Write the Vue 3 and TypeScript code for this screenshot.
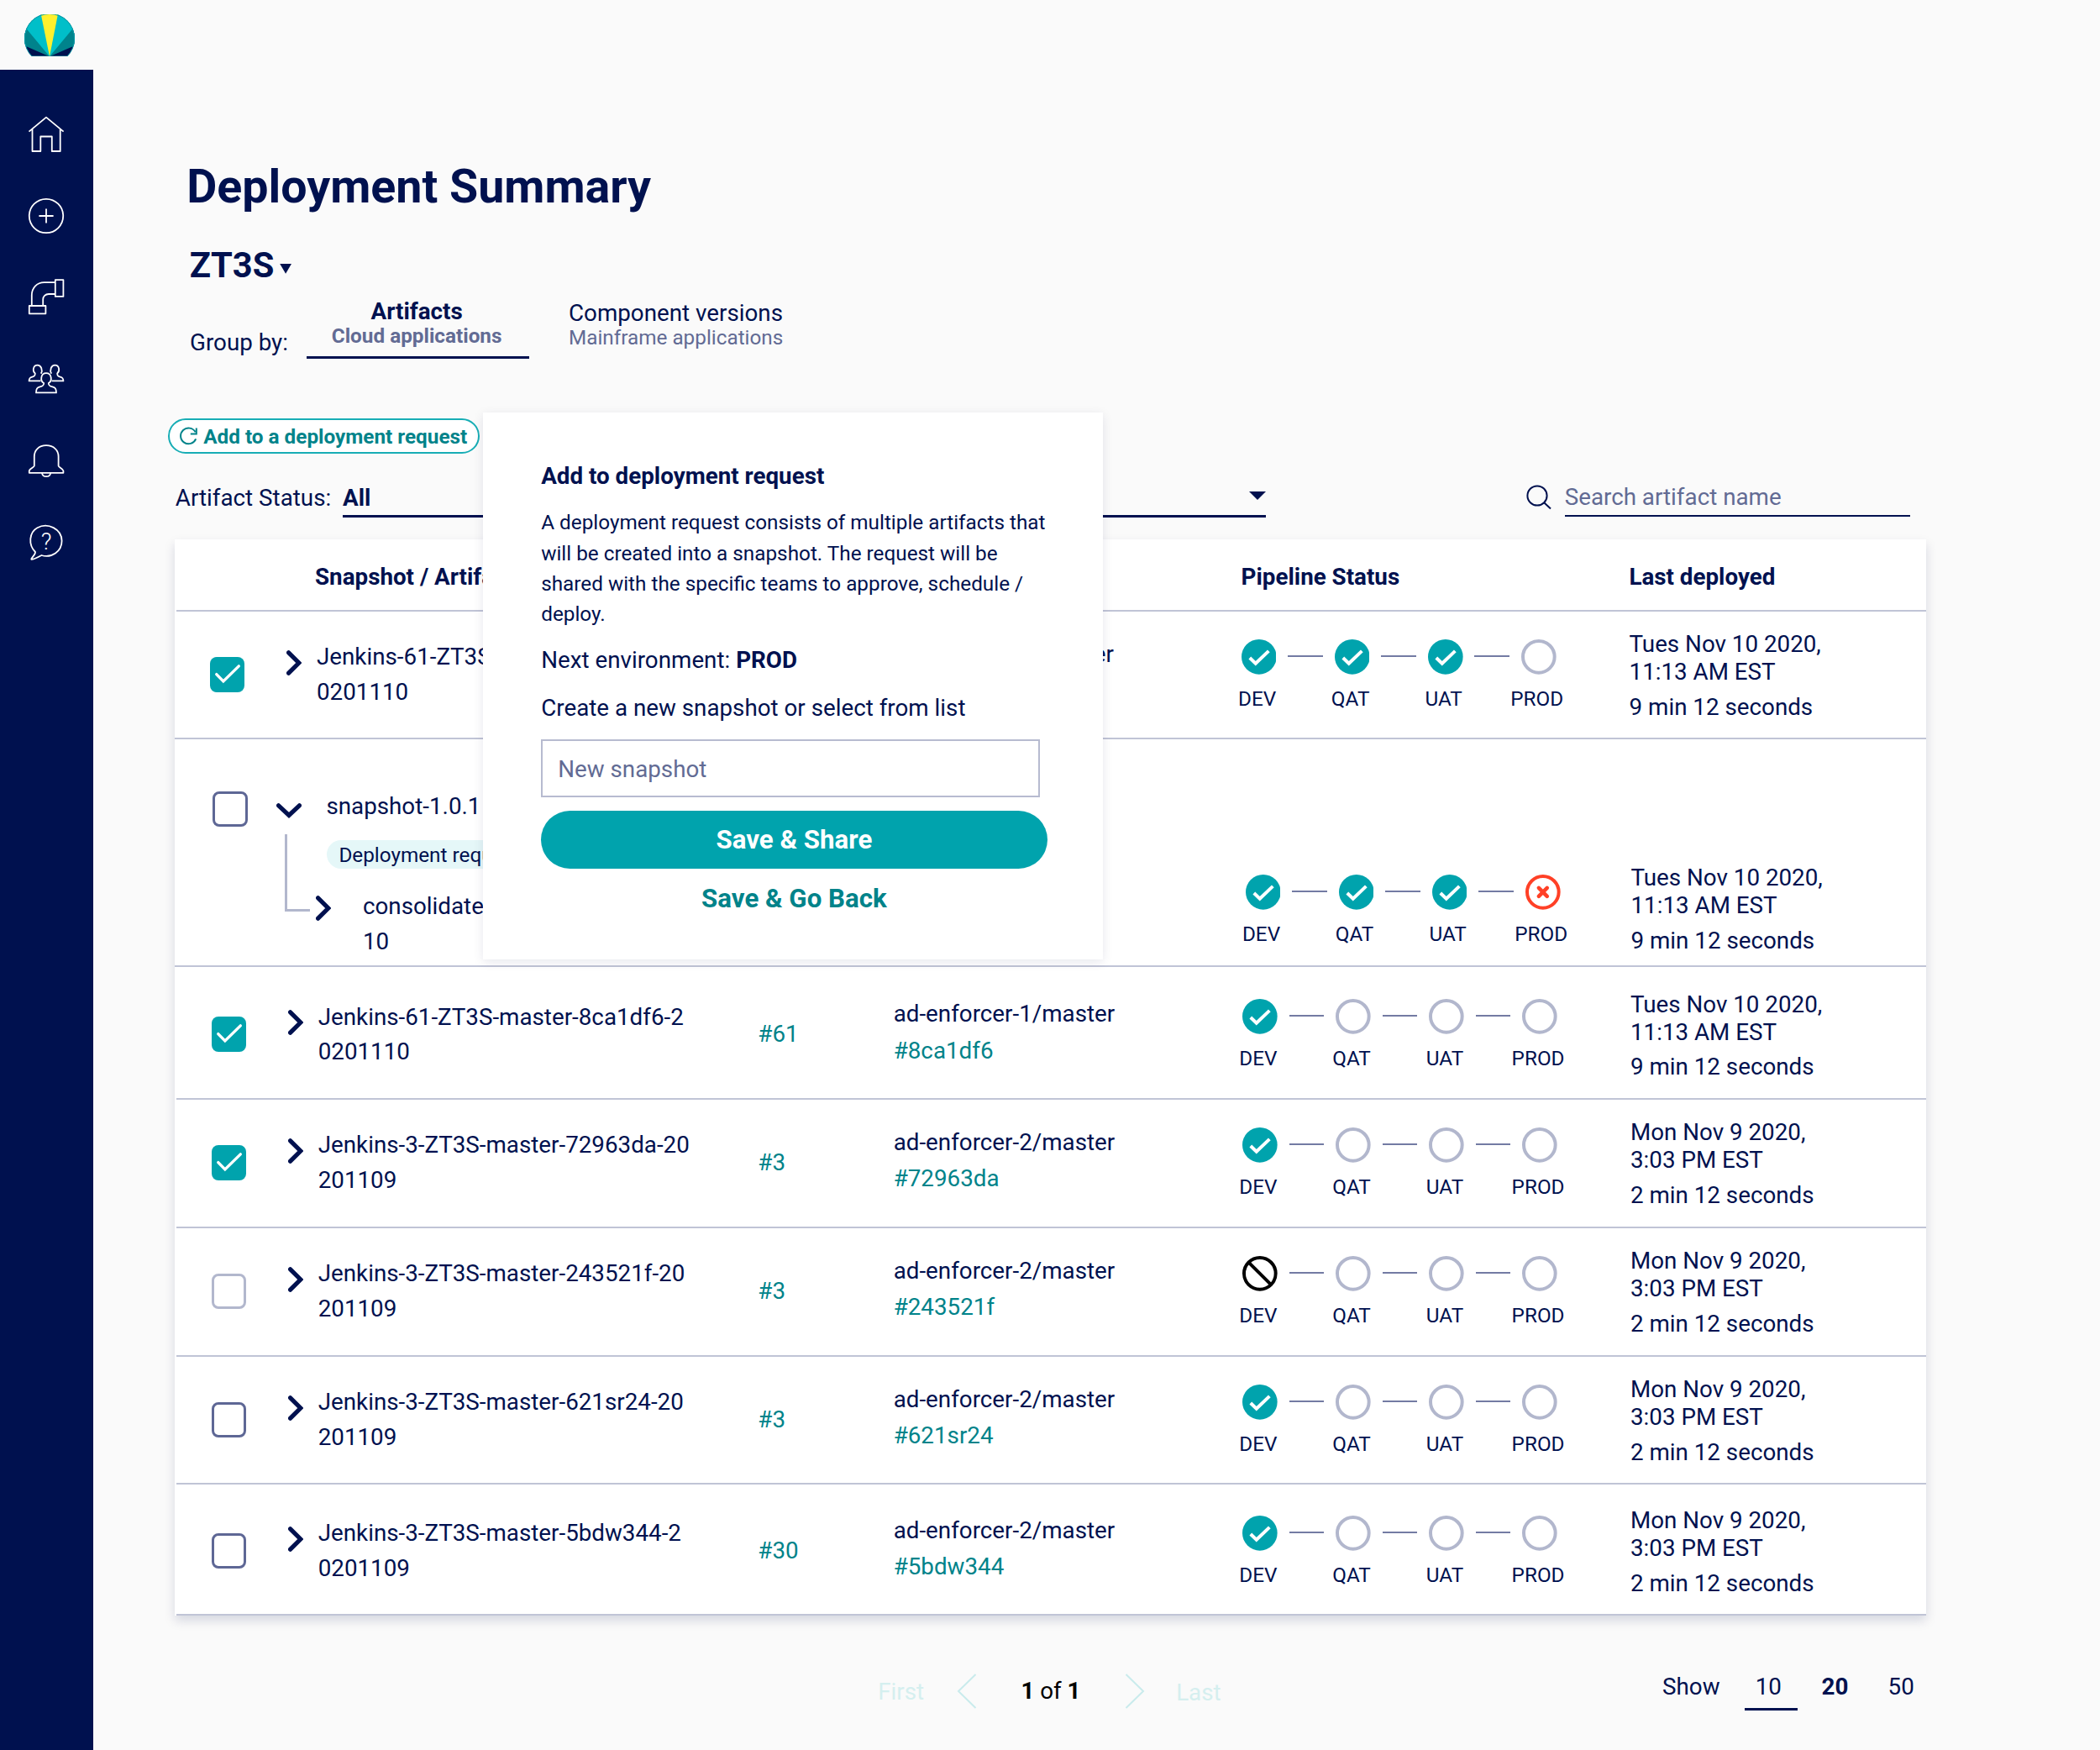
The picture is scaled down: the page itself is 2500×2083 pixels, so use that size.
<script setup lang="ts">
type Status = 'done' | 'todo' | 'failed' | 'blocked'
type Check = 'checked' | 'unchecked' | 'disabled'

interface Row {
  check: Check
  name: string[]
  build: string
  branch: string
  commit: string
  stages: Status[]
  date: string[]
  duration: string
  kind: string
}

const environments = ['DEV', 'QAT', 'UAT', 'PROD']
const tuesday = ['Tues Nov 10 2020,', '11:13 AM EST']
const monday = ['Mon Nov 9 2020,', '3:03 PM EST']

const firstRow: Row = {
  check: 'checked', name: ['Jenkins-61-ZT3S-master-8ca1df6-2', '0201110'], build: '#61',
  branch: 'ad-enforcer-1/master', commit: '#8ca1df6', stages: ['done', 'done', 'done', 'todo'],
  date: tuesday, duration: '9 min 12 seconds', kind: 'lead',
}

const rows: Row[] = [
  firstRow,
  {
    check: 'unchecked', name: [], build: '', branch: '', commit: '',
    stages: ['done', 'done', 'done', 'failed'], date: tuesday, duration: '9 min 12 seconds', kind: 'group',
  },
  { ...firstRow, stages: ['done', 'todo', 'todo', 'todo'], kind: 'roomy' },
  {
    check: 'checked', name: ['Jenkins-3-ZT3S-master-72963da-20', '201109'], build: '#3',
    branch: 'ad-enforcer-2/master', commit: '#72963da', stages: ['done', 'todo', 'todo', 'todo'],
    date: monday, duration: '2 min 12 seconds', kind: 'plain',
  },
  {
    check: 'disabled', name: ['Jenkins-3-ZT3S-master-243521f-20', '201109'], build: '#3',
    branch: 'ad-enforcer-2/master', commit: '#243521f', stages: ['blocked', 'todo', 'todo', 'todo'],
    date: monday, duration: '2 min 12 seconds', kind: 'plain',
  },
  {
    check: 'unchecked', name: ['Jenkins-3-ZT3S-master-621sr24-20', '201109'], build: '#3',
    branch: 'ad-enforcer-2/master', commit: '#621sr24', stages: ['done', 'todo', 'todo', 'todo'],
    date: monday, duration: '2 min 12 seconds', kind: 'plain short',
  },
  {
    check: 'unchecked', name: ['Jenkins-3-ZT3S-master-5bdw344-2', '0201109'], build: '#30',
    branch: 'ad-enforcer-2/master', commit: '#5bdw344', stages: ['done', 'todo', 'todo', 'todo'],
    date: monday, duration: '2 min 12 seconds', kind: 'last',
  },
]
</script>

<template>
  <div class="app">
    <aside class="sidebar">
      <div class="brand">
        <svg class="logo" viewBox="0 0 60 50.5">
          <defs>
            <clipPath id="dome"><path d="M9 50.3 A30 30 0 1 1 51 50.3 Z" /></clipPath>
          </defs>
          <g clip-path="url(#dome)">
            <rect width="60" height="51" fill="#00114f" />
            <path d="M30 50.3 L-2 36.3 V-2 H62 V36.3 Z" fill="#00838c" />
            <path d="M30 50.3 L-12 0 V-10 H72 V0 Z" fill="#00bfc9" />
            <path d="M30 50.3 L19.8 0 H39.9 Z" fill="#fff02d" />
          </g>
          <path d="M9 50 A29.6 29.6 0 1 1 51 50 Z" fill="none" stroke="#00a3ad" stroke-width="0.9" />
        </svg>
      </div>
      <nav class="nav">
        <svg viewBox="0 0 44 44">
          <path d="M1.5 18.6 L22 1.6 L42.6 18.6 M5.5 15.6 V42 H15.3 V24.5 H28.8 V42 H38.7 V15.6" />
        </svg>
        <svg viewBox="0 0 44 44">
          <circle cx="22" cy="22" r="20.2" />
          <path d="M13.4 22 H30.6 M22 13.4 V30.6" />
        </svg>
        <svg viewBox="0 0 44 44">
          <path d="M32.8 1.2 H42.4 V20.9 H32.8 Z M1.8 32 H21.4 V41.3 H1.8 Z" />
          <path d="M32.8 4.2 H19.8 C10.6 4.2 4.8 11 4.8 19.5 V32 M32.8 18 H25 C21 18 18.2 21 18.2 24.6 V32" />
        </svg>
        <svg viewBox="0 0 44 44">
          <path d="M19.2 27 C14.4 24.4 15.4 15.2 22 15.2 C28.6 15.2 29.6 24.4 24.8 27 C24.8 29.8 26 30.6 29.4 31.4 C32.8 32.4 34 33.6 34 38.4 H10 C10 33.6 11.2 32.4 14.6 31.4 C18 30.6 19.2 29.8 19.2 27 Z" />
          <path d="M15.8 15.8 C18.2 11.6 16 5.6 11.6 5.6 C6.6 5.6 5.2 12.4 8.8 15.4 C8.8 18.4 7.8 18.9 5.4 19.6 C2.6 20.4 1.6 21.2 1.6 24.4 H15.4" />
          <path d="M28.2 15.8 C25.8 11.6 28 5.6 32.4 5.6 C37.4 5.6 38.8 12.4 35.2 15.4 C35.2 18.4 36.2 18.9 38.6 19.6 C41.4 20.4 42.4 21.2 42.4 24.4 H28.6" />
        </svg>
        <svg viewBox="0 0 44 44">
          <path d="M22 4.2 C13 4.2 7.8 10 7.8 17.5 V28.6 C7.8 30 2 31.8 1.8 34.4 V36.8 H42.4 V34.4 C42 31.8 36.6 30 36.6 28.6 V17.5 C36.6 10 31.2 4.2 22 4.2 Z M17 37 C17.6 42.6 26.6 42.6 27.2 37" />
        </svg>
        <svg viewBox="0 0 44 44">
          <path d="M9 33 C0.4 24.4 1.6 9.6 11.4 4.2 C24 -2.6 40.4 5.6 40.6 19.8 C40.6 32.4 28.4 40.6 16.4 37 C12.4 38.8 8.8 41.6 4.4 41.8 C3.2 40.6 9.4 36.6 9 33 Z" />
          <text x="22" y="30" text-anchor="middle">?</text>
        </svg>
      </nav>
    </aside>

    <main class="content">
      <h1>Deployment Summary</h1>
      <div class="project">
        <span>ZT3S</span>
        <svg viewBox="0 0 14 12"><path d="M0 0 H14 L7 12 Z" fill="#00114f" /></svg>
      </div>
      <div class="grouping">
        <span class="grouping-label">Group by:</span>
        <div class="tab active"><b>Artifacts</b><small>Cloud applications</small></div>
        <div class="tab"><span>Component versions</span><small>Mainframe applications</small></div>
      </div>

      <button class="add">
        <svg viewBox="0 0 22 22"><path d="M20.2 14.4 A9.4 9.4 0 1 1 19.6 6.2 M20.8 1.6 V8.4 H13.8" /></svg>
        <span>Add to a deployment request</span>
      </button>

      <div class="filters">
        <span class="filters-label">Artifact Status:</span>
        <div class="select">
          <b>All</b>
          <svg viewBox="0 0 20 10"><path d="M0 0 H20 L10 10 Z" fill="#00114f" /></svg>
        </div>
        <svg class="search-icon" viewBox="0 0 30 30">
          <circle cx="13" cy="13" r="11.6" /><path d="M21.2 21.2 L29 28.6" />
        </svg>
        <div class="search">Search artifact name</div>
      </div>

      <section class="table">
        <div class="head">
          <b class="head-name">Snapshot / Artifact</b>
          <b class="head-pipeline">Pipeline Status</b>
          <b>Last deployed</b>
        </div>
        <div v-for="(row, i) in rows" :key="i" class="row" :class="row.kind">
          <div class="check-cell">
            <span class="checkbox" :class="row.check">
              <svg v-if="row.check === 'checked'" viewBox="0 0 42 42"><path d="M7.8 20.8 L16 29.2 L34.6 11" /></svg>
            </span>
          </div>

          <div v-if="row.kind === 'group'" class="tree">
            <div class="tree-top">
              <svg class="chevron-down" viewBox="0 0 30 18"><path d="M2.6 2.8 L15 14.4 L27.4 2.8" /></svg>
              <span>snapshot-1.0.1</span>
            </div>
            <div class="tree-body">
              <span class="elbow"></span>
              <div>
                <span class="badge">Deployment request</span>
                <div class="child">
                  <svg class="chevron" viewBox="0 0 18 30"><path d="M2.6 2.8 L14.8 15 L2.6 27.2" /></svg>
                  <span class="child-name">consolidated-ZT3S-master-202011<br />10</span>
                </div>
              </div>
            </div>
          </div>

          <template v-else>
            <svg class="chevron" viewBox="0 0 18 30"><path d="M2.6 2.8 L14.8 15 L2.6 27.2" /></svg>
            <div class="name"><div v-for="part in row.name" :key="part">{{ part }}</div></div>
            <div class="build">{{ row.build }}</div>
            <div class="branch">{{ row.branch }}<br /><span>{{ row.commit }}</span></div>
          </template>

          <div class="pipeline">
            <template v-for="(stage, s) in row.stages" :key="s">
              <span v-if="s > 0" class="link"></span>
              <div class="stage">
                <svg viewBox="0 0 42 42">
                  <template v-if="stage === 'done'">
                    <circle cx="21" cy="21" r="21" fill="#00a3ad" />
                    <path d="M9.9 22.2 L16.9 29 L32.6 14" fill="none" stroke="#fff" stroke-width="4" />
                  </template>
                  <circle v-else-if="stage === 'todo'" cx="21" cy="21" r="19" fill="none" stroke="#b2b7cd" stroke-width="4" />
                  <g v-else-if="stage === 'failed'" fill="none" stroke="#ff4026">
                    <circle cx="21" cy="21" r="19" stroke-width="4" />
                    <path d="M16 16 L26 26 M26 16 L16 26" stroke-width="4.6" stroke-linecap="round" />
                  </g>
                  <g v-else fill="none" stroke="#000" stroke-width="4">
                    <circle cx="21" cy="21" r="19" /><path d="M7.6 7.6 L34.4 34.4" />
                  </g>
                </svg>
                <span class="env">{{ environments[s] }}</span>
              </div>
            </template>
          </div>

          <div class="deployed">
            <div v-for="part in row.date" :key="part">{{ part }}</div>
            <div class="duration">{{ row.duration }}</div>
          </div>
        </div>
      </section>

      <footer class="pager">
        <span class="muted first">First</span>
        <svg class="arrow prev" viewBox="0 0 24 42"><path d="M22.5 1 L2 21 L22.5 41" /></svg>
        <span class="position"><b>1</b> of <b>1</b></span>
        <svg class="arrow next" viewBox="0 0 24 42"><path d="M1.5 1 L22 21 L1.5 41" /></svg>
        <span class="muted final">Last</span>
        <span class="show">Show</span>
        <span class="size current">10</span>
        <b class="size twenty">20</b>
        <span class="size">50</span>
      </footer>
    </main>

    <div class="modal">
      <b class="modal-title">Add to deployment request</b>
      <p>A deployment request consists of multiple artifacts that will be created into a snapshot. The request will be shared with the specific teams to approve, schedule / deploy.</p>
      <div class="next-env">Next environment: <b>PROD</b></div>
      <div class="create">Create a new snapshot or select from list</div>
      <div class="input">New snapshot</div>
      <button class="primary">Save &amp; Share</button>
      <button class="secondary">Save &amp; Go Back</button>
    </div>
  </div>
</template>

<style>
body {
  background: #fafafa;
}
</style>

<style scoped>
* {
  box-sizing: border-box;
}
.app {
  position: relative;
  display: flex;
  width: 2500px;
  height: 2083px;
  overflow: hidden;
  background: #fafafa;
  color: #00114f;
  font: 27.78px/32px Roboto, sans-serif;
}
svg {
  display: block;
  flex: none;
}
span,
b,
small {
  white-space: nowrap;
}
button {
  font-family: inherit;
  color: inherit;
}

/* Sidebar */
.sidebar {
  display: flex;
  flex-direction: column;
  width: 111px;
  flex: none;
}
.brand {
  height: 83px;
  padding: 16.5px 0 0 29px;
}
.logo {
  width: 60px;
  height: 50.5px;
}
.nav {
  flex: 1;
  display: flex;
  flex-direction: column;
  gap: 53.2px;
  padding: 54.6px 0 0 33px;
  background: #00114f;
}
.nav svg {
  width: 44px;
  height: 44px;
  fill: none;
  stroke: #fff;
  stroke-width: 1.8;
  stroke-linejoin: round;
  overflow: visible;
}
.nav text {
  font: 300 28px Roboto, sans-serif;
  fill: #fff;
  stroke: none;
}

/* Heading */
.content {
  flex: 1;
  min-width: 0;
}
h1 {
  margin: 189px 0 0 111.2px;
  font-size: 55.56px;
  line-height: 66px;
}
.project {
  display: flex;
  margin: 35.5px 0 0 114.7px;
  font-size: 41.67px;
  line-height: 50px;
  font-weight: 700;
}
.project svg {
  width: 14.2px;
  height: 11.8px;
  margin: 23.5px 0 0 7px;
}
.grouping {
  display: flex;
  height: 72.5px;
  margin: 14px 0 0 115px;
}
.grouping-label {
  width: 138.9px;
  margin-top: 37px;
}
.tab {
  display: flex;
  flex-direction: column;
  margin-left: 46.6px;
  padding-top: 2.4px;
}
.tab small {
  font-size: 24.31px;
  line-height: 25px;
  color: #626b94;
}
.tab.active {
  width: 265.5px;
  margin: 0;
  padding: 0 3px 0 0;
  align-items: center;
  border-bottom: 3px solid #00114f;
}
.tab.active small {
  font-weight: 700;
}

/* Toolbar */
.add {
  display: flex;
  align-items: center;
  width: 371px;
  height: 42px;
  margin: 71px 0 0 89px;
  padding: 0 0 0 11.2px;
  border: 2px solid #17adb5;
  border-radius: 21px;
  background: #fff;
  color: #00838a;
  font-size: 24.31px;
  line-height: 30px;
  font-weight: 700;
}
.add span {
  padding-top: 1.5px;
}
.add svg {
  width: 22px;
  height: 22px;
  margin-right: 7px;
  fill: none;
  stroke: #00838a;
  stroke-width: 2;
}
.filters {
  display: flex;
  align-items: flex-start;
  height: 66.8px;
  margin: 35.2px 0 0 97.8px;
}
.filters-label {
  width: 199.3px;
  margin-top: 2.3px;
}
.select {
  display: flex;
  justify-content: space-between;
  width: 1098.8px;
  height: 39.5px;
  margin-top: 1.3px;
  border-bottom: 3px solid #00114f;
}
.select b {
  margin-top: 1px;
}
.select svg {
  width: 20px;
  height: 10px;
  margin-top: 8.5px;
}
.search-icon {
  width: 30px;
  height: 30px;
  margin: 2px 15.7px 0 310.1px;
  fill: none;
  stroke: #00114f;
  stroke-width: 2;
}
.search {
  width: 411.7px;
  height: 39.6px;
  padding-top: 0.6px;
  border-bottom: 2px solid #00114f;
  color: #626b94;
}

/* Table */
.table {
  width: 2085px;
  margin-left: 97px;
  background: #fff;
  box-shadow: 0 6px 12px rgba(0, 17, 79, 0.15);
}
.head {
  display: flex;
  height: 86px;
  margin-left: 2px;
  padding: 29.4px 0 0 165px;
  border-bottom: 2px solid #c0c4d6;
}
.head-name {
  width: 1102.6px;
}
.head-pipeline {
  width: 461.8px;
}
.row {
  display: grid;
  grid-template-columns: 132.7px 36px 523.6px 161.4px 415.4px 461.9px 1fr;
  align-items: start;
  height: 153px;
  margin-left: 2px;
  border-bottom: 2px solid #c0c4d6;
}
.row.lead {
  grid-template-columns: 132.7px 36.3px 524.2px 161.2px 415.4px 461.8px 1fr;
  height: 152px;
  margin-left: 0;
}
.row.short {
  height: 152px;
}
.row.roomy {
  height: 158px;
  padding-top: 5.5px;
}
.row.last {
  height: 156px;
  padding-top: 4px;
}
.row.group {
  grid-template-columns: 120.8px 1153.9px 458.8px 1fr;
  height: 271px;
  margin-left: 0;
}
.check-cell {
  padding: 54px 0 0 41.8px;
}
.group .check-cell {
  padding: 62.3px 0 0 45.4px;
}
.checkbox {
  display: block;
  width: 41.67px;
  height: 41.67px;
  border: 3px solid #5e6795;
  border-radius: 8px;
}
.checkbox.disabled {
  border-color: #b2b7cd;
}
.checkbox.checked {
  border: 0;
  background: #00a3ad;
}
.checkbox path {
  fill: none;
  stroke: #fff;
  stroke-width: 3.4;
  stroke-linecap: round;
}
.chevron,
.chevron-down {
  fill: none;
  stroke: #00114f;
  stroke-width: 5.2;
  stroke-linecap: round;
}
.chevron {
  width: 18px;
  height: 30px;
  margin-top: 45.7px;
}
.name {
  margin-top: 33.2px;
  line-height: 41.67px;
}
.build {
  margin-top: 54px;
  line-height: 41.67px;
  color: #00838a;
}
.branch {
  margin-top: 29px;
  line-height: 43.3px;
}
.branch span {
  color: #00838a;
}
.pipeline {
  display: flex;
  margin-top: 33px;
}
.group .pipeline {
  margin-top: 161.2px;
}
.stage {
  display: flex;
  flex-direction: column;
  align-items: center;
  width: 41.67px;
}
.stage svg {
  width: 41.67px;
  height: 41.67px;
}
.env {
  margin: 13.9px 0 0 -4px;
  font-size: 24.31px;
  line-height: 30px;
}
.link {
  width: 41.67px;
  height: 2px;
  margin: 19px 13.89px 0;
  background: #737ba3;
}
.deployed {
  margin-top: 22.4px;
  line-height: 33px;
}
.group .deployed {
  margin-top: 148px;
}
.duration {
  margin-top: 4.6px;
  line-height: 41.67px;
}

/* Expanded snapshot */
.tree {
  padding-top: 58.4px;
  line-height: 41.67px;
}
.tree-top {
  display: flex;
}
.tree-top span {
  padding-top: 0.8px;
  margin-bottom: -0.8px;
}
.chevron-down {
  width: 30px;
  height: 18px;
  margin: 17.3px 29.6px 0 0;
}
.tree-body {
  display: flex;
  align-items: flex-start;
  padding: 12.9px 0 0 9.9px;
}
.elbow {
  width: 30.8px;
  height: 92px;
  border: solid #b2b7cd;
  border-width: 0 0 3px 3px;
}
.badge {
  display: block;
  width: max-content;
  height: 34.5px;
  margin: 7px 0 0 19.5px;
  padding: 0 14.4px;
  border-radius: 17px;
  background: #e5f7f8;
  font-size: 24.31px;
  line-height: 36px;
}
.child {
  display: flex;
}
.child .chevron {
  margin: 31.5px 38px 0 6.5px;
}
.child-name {
  margin-top: 24px;
}

/* Pager */
.pager {
  display: flex;
  align-items: flex-start;
  padding: 57px 0 0 934.2px;
  line-height: 40px;
}
.muted {
  color: #d5efef;
}
.first {
  width: 94.3px;
  margin-top: 13.8px;
}
.arrow {
  width: 24px;
  height: 42px;
  margin-top: 12.5px;
  fill: none;
  stroke: #c9ebec;
  stroke-width: 2;
}
.position {
  width: 123.2px;
  margin: 13.5px 0 0 51.9px;
  color: #000;
}
.final {
  width: 578.9px;
  margin: 15.5px 0 0 37.6px;
}
.show {
  width: 98.3px;
  margin-top: 8.5px;
}
.size {
  margin-top: 8.5px;
}
.current {
  width: 62.7px;
  height: 47.5px;
  padding-left: 12.3px;
  border-bottom: 3px solid #00114f;
}
.twenty {
  width: 79px;
  margin-left: 28.5px;
}

/* Dialog */
.modal {
  position: absolute;
  left: 574.6px;
  top: 491px;
  width: 738px;
  height: 651px;
  padding: 59px 65.7px 0 69.6px;
  background: #fff;
  box-shadow: 0 3px 12px rgba(0, 17, 79, 0.1);
  line-height: 33px;
}
.modal-title {
  display: block;
}
.modal p {
  margin: 21.1px 0 18.9px;
  font-size: 24.31px;
  line-height: 36.46px;
}
.create {
  margin: 24.2px 0 21px;
}
.input {
  width: 594px;
  height: 69.5px;
  padding: 1px 0 0 18px;
  border: 2px solid #b7bbd0;
  line-height: 66px;
  color: #626b94;
}
.primary,
.secondary {
  display: block;
  width: 602.4px;
  padding: 0;
  border: 0;
  font-size: 31.25px;
  font-weight: 700;
}
.primary {
  height: 69.5px;
  margin: 15.5px 0 15.8px;
  padding-top: 1.4px;
  border-radius: 35px;
  background: #00a3ad;
  line-height: 68px;
  color: #fff;
}
.secondary {
  background: none;
  line-height: 40px;
  color: #00838a;
}
</style>
